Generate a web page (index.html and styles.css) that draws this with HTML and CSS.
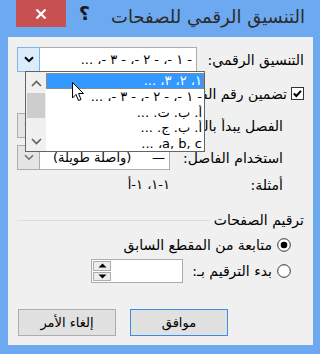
FILE: index.html
```html
<!DOCTYPE html>
<html lang="ar" dir="rtl">
<head>
    <meta charset="UTF-8">
    <meta name="viewport" content="width=device-width, initial-scale=1.0">
    <title>التنسيق الرقمي للصفحات</title>
    <link rel="stylesheet" href="styles.css">
</head>
<body>
    <div class="window">
        <div class="titlebar">
            <div class="close-btn">
                <svg width="12" height="10" viewBox="0 0 12 10"><path d="M1.5 0.5 L10.5 9.5 M10.5 0.5 L1.5 9.5" stroke="#fff" stroke-width="2.2"/></svg>
            </div>
            <div class="help-btn">?</div>
            <div class="title">التنسيق الرقمي للصفحات</div>
        </div>

        <div class="client">
            <!-- Number format -->
            <div class="row">
                <span class="label">التنسيق الرقمي:</span>
                <div class="combo combo-open">
                    <span class="combo-text">- ١ -، - ٢ -، - ٣ -، ...</span>
                    <span class="combo-btn">
                        <svg width="10" height="7" viewBox="0 0 10 7"><path d="M1 1.2 L5 5.2 L9 1.2" fill="none" stroke="#000" stroke-width="2"/></svg>
                    </span>

                    <div class="dropdown">
                        <div class="list">
                            <div class="item selected">١، ٢، ٣، ...</div>
                            <div class="item">- ١ -، - ٢ -، - ٣ -، ...</div>
                            <div class="item">أ. ب. ت. ...</div>
                            <div class="item">أ. ب. ج. ...</div>
                            <div class="item">a, b, c، ...</div>
                        </div>
                        <div class="scrollbar">
                            <svg width="11" height="7" viewBox="0 0 11 7"><path d="M1 6 L5.5 1.5 L10 6" fill="none" stroke="#606060" stroke-width="1.6"/></svg>
                            <div class="thumb"></div>
                            <svg class="down" width="11" height="7" viewBox="0 0 11 7"><path d="M1 1 L5.5 5.5 L10 1" fill="none" stroke="#606060" stroke-width="1.6"/></svg>
                        </div>
                        <svg class="cursor" width="13" height="20" viewBox="0 0 13 20"><path d="M0.5 0.5 L0.5 16 L4 12.5 L6.5 18.5 L9 17.5 L6.5 11.5 L11.5 11.5 Z" fill="#fff" stroke="#000" stroke-width="1"/></svg>
                    </div>
                </div>
            </div>

            <!-- Include chapter number (partly under the open list) -->
            <div class="row row-check">
                <svg width="13" height="13" viewBox="0 0 13 13"><rect x="0.5" y="0.5" width="12" height="12" fill="#fff" stroke="#333"/><path d="M2.8 6.5 L5.3 9 L10 3.8" fill="none" stroke="#000" stroke-width="2"/></svg>
                <span class="label clipped clip-check">تضمين رقم الفصل</span>
            </div>

            <div class="row indent">
                <span class="label clipped clip-style">الفصل يبدأ بالنمط:</span>
                <div class="combo combo-short">
                    <span class="combo-text"></span>
                    <span class="combo-btn gray">
                        <svg width="10" height="7" viewBox="0 0 10 7"><path d="M1 1.2 L5 5.2 L9 1.2" fill="none" stroke="#707070" stroke-width="1.6"/></svg>
                    </span>
                </div>
            </div>

            <div class="row indent">
                <span class="label">استخدام الفاصل:</span>
                <div class="combo combo-short">
                    <span class="combo-text">—&nbsp;&nbsp;&nbsp;&nbsp;&nbsp;(واصلة طويلة)</span>
                    <span class="combo-btn gray">
                        <svg width="10" height="7" viewBox="0 0 10 7"><path d="M1 1.2 L5 5.2 L9 1.2" fill="none" stroke="#707070" stroke-width="1.6"/></svg>
                    </span>
                </div>
            </div>

            <div class="row indent row-examples">
                <span class="label">أمثلة:</span>
                <span class="examples">١-١، ١-أ</span>
            </div>

            <!-- Page numbering -->
            <div class="group-heading">
                <span>ترقيم الصفحات</span>
                <span class="line"></span>
            </div>

            <div class="radio-row first">
                <svg width="14" height="14" viewBox="0 0 14 14"><circle cx="7" cy="7" r="6.3" fill="#fff" stroke="#333"/><circle cx="7" cy="7" r="3.3" fill="#000"/></svg>
                <span class="label">متابعة من المقطع السابق</span>
            </div>

            <div class="radio-row second">
                <svg width="14" height="14" viewBox="0 0 14 14"><circle cx="7" cy="7" r="6.3" fill="#fff" stroke="#333"/></svg>
                <span class="label">بدء الترقيم بـ:</span>
                <div class="spin">
                    <span class="spin-field"></span>
                    <span class="spin-btns">
                        <span class="spin-btn"><svg width="9" height="5" viewBox="0 0 9 5"><path d="M0.5 4.5 L4.5 0.5 L8.5 4.5 Z" fill="#000"/></svg></span>
                        <span class="spin-btn"><svg width="9" height="5" viewBox="0 0 9 5"><path d="M0.5 0.5 L4.5 4.5 L8.5 0.5 Z" fill="#000"/></svg></span>
                    </span>
                </div>
            </div>

            <div class="buttons">
                <button type="button" class="btn default">موافق</button>
                <button type="button" class="btn">إلغاء الأمر</button>
            </div>
        </div>
    </div>
</body>
</html>
```

FILE: styles.css
```css
body {
    margin: 0;
    padding: 0;
    font-family: Tahoma, "DejaVu Sans", sans-serif;
    font-size: 14px;
    color: #000;
}

.window {
    width: 320px;
    height: 354px;
    box-sizing: border-box;
    background-color: #6ca9f0;
    padding: 0 7px 9px 8px;
}

/* Title bar */
.titlebar {
    direction: ltr;
    display: flex;
    align-items: flex-start;
    height: 37px;
    margin-left: 8px;
    margin-right: -7px;
}

.close-btn {
    width: 50px;
    height: 27px;
    background-color: #c75050;
    display: flex;
    align-items: center;
    justify-content: center;
}

.help-btn {
    margin-left: 13px;
    margin-top: 2px;
    font-family: "DejaVu Sans", sans-serif;
    font-weight: bold;
    font-size: 19px;
    color: #1a1a1a;
    transform: scaleX(-1);
}

.title {
    flex: 1;
    text-align: right;
    padding-right: 15px;
    padding-top: 6px;
    font-size: 18px;
    color: #2b2b2b;
    direction: rtl;
}

/* Client area */
.client {
    position: relative;
    height: 308px;
    box-sizing: border-box;
    background-color: #f0f0f0;
    padding: 10px 9px 0 9px;
}

.row {
    display: flex;
    justify-content: space-between;
    align-items: center;
    height: 25px;
}

.row.indent {
    padding-right: 21px;
    margin-top: 7px;
}

.row-check {
    justify-content: flex-start;
    gap: 4px;
    margin-top: 9px;
}

.row-examples {
    margin-top: 2px !important;
}

.label {
    white-space: nowrap;
}

/* labels cut off by the open list */
.clipped {
    overflow: hidden;
}

.clip-check {
    width: 82px;
}

.clip-style {
    width: 78px;
}

/* Combobox */
.combo {
    position: relative;
    display: flex;
    align-items: stretch;
    box-sizing: border-box;
    width: 180px;
    height: 25px;
    background-color: #fff;
    border: 1px solid #acacac;
}

.combo-short {
    width: 153px;
}

.combo-text {
    flex: 1;
    padding-right: 4px;
    line-height: 23px;
    font-size: 13px;
    white-space: nowrap;
    overflow: hidden;
}

.combo-btn {
    width: 21px;
    display: flex;
    align-items: center;
    justify-content: center;
    background-color: #dcecfc;
    border: 1px solid #7eb4ea;
    margin: -1px;
}

.combo-btn.gray {
    background-color: #e5e5e5;
    border-color: #acacac;
}

.combo-open {
    z-index: 2;
}

.dropdown {
    position: absolute;
    top: 100%;
    left: 7px;
    width: 180px;
    height: 81px;
    box-sizing: border-box;
    background-color: #fff;
    border: 1px solid #646464;
    display: flex;
}

.list {
    flex: 1;
    padding-top: 1px;
    font-size: 13px;
}

.item {
    height: 15.8px;
    line-height: 15px;
    box-sizing: border-box;
    padding-right: 2px;
    white-space: nowrap;
    overflow: hidden;
}

.item.selected {
    background-color: #3399ff;
    color: #fff;
    border: 1px dotted #c8803a;
    line-height: 13px;
    padding-right: 1px;
}

.scrollbar {
    width: 20px;
    background-color: #f0f0f0;
    display: flex;
    flex-direction: column;
    align-items: center;
    padding-top: 8px;
    box-sizing: border-box;
}

.thumb {
    width: 18px;
    height: 25px;
    background-color: #cdcdcd;
    margin-top: 6px;
}

.scrollbar .down {
    margin-top: 20px;
}

.cursor {
    position: absolute;
    left: 46px;
    top: 10px;
}

.examples {
    width: 153px;
    text-align: right;
    font-size: 13px;
}

/* Page numbering group */
.group-heading {
    display: flex;
    align-items: center;
    margin-top: 15px;
    height: 16px;
}

.group-heading .line {
    flex: 1;
    height: 1px;
    background-color: #dcdcdc;
    margin-right: 4px;
}

.radio-row {
    display: flex;
    align-items: center;
    gap: 5px;
    padding-right: 13px;
}

.radio-row.first {
    height: 20px;
    margin-top: 7px;
}

.radio-row.second {
    height: 24px;
    margin-top: 4px;
}

.spin {
    display: flex;
    width: 92px;
    height: 24px;
    box-sizing: border-box;
    background-color: #fff;
    border: 1px solid #acacac;
    margin-right: auto;
    margin-left: 74px;
}

.spin-field {
    flex: 1;
}

.spin-btns {
    width: 20px;
    display: flex;
    flex-direction: column;
    padding: 1px;
    gap: 1px;
    box-sizing: border-box;
}

.spin-btn {
    flex: 1;
    display: flex;
    align-items: center;
    justify-content: center;
    background-color: #ececec;
    border: 1px solid #acacac;
}

/* Buttons */
.buttons {
    display: flex;
    justify-content: flex-end;
    gap: 14px;
    margin-top: 26px;
    padding-left: 1px;
}

.btn {
    width: 98px;
    height: 27px;
    font-family: Tahoma, "DejaVu Sans", sans-serif;
    font-size: 13px;
    background-color: #e1e1e1;
    border: 1px solid #adadad;
    color: #000;
    padding: 0;
}

.btn.default {
    border-color: #3c8ce7;
}
```
